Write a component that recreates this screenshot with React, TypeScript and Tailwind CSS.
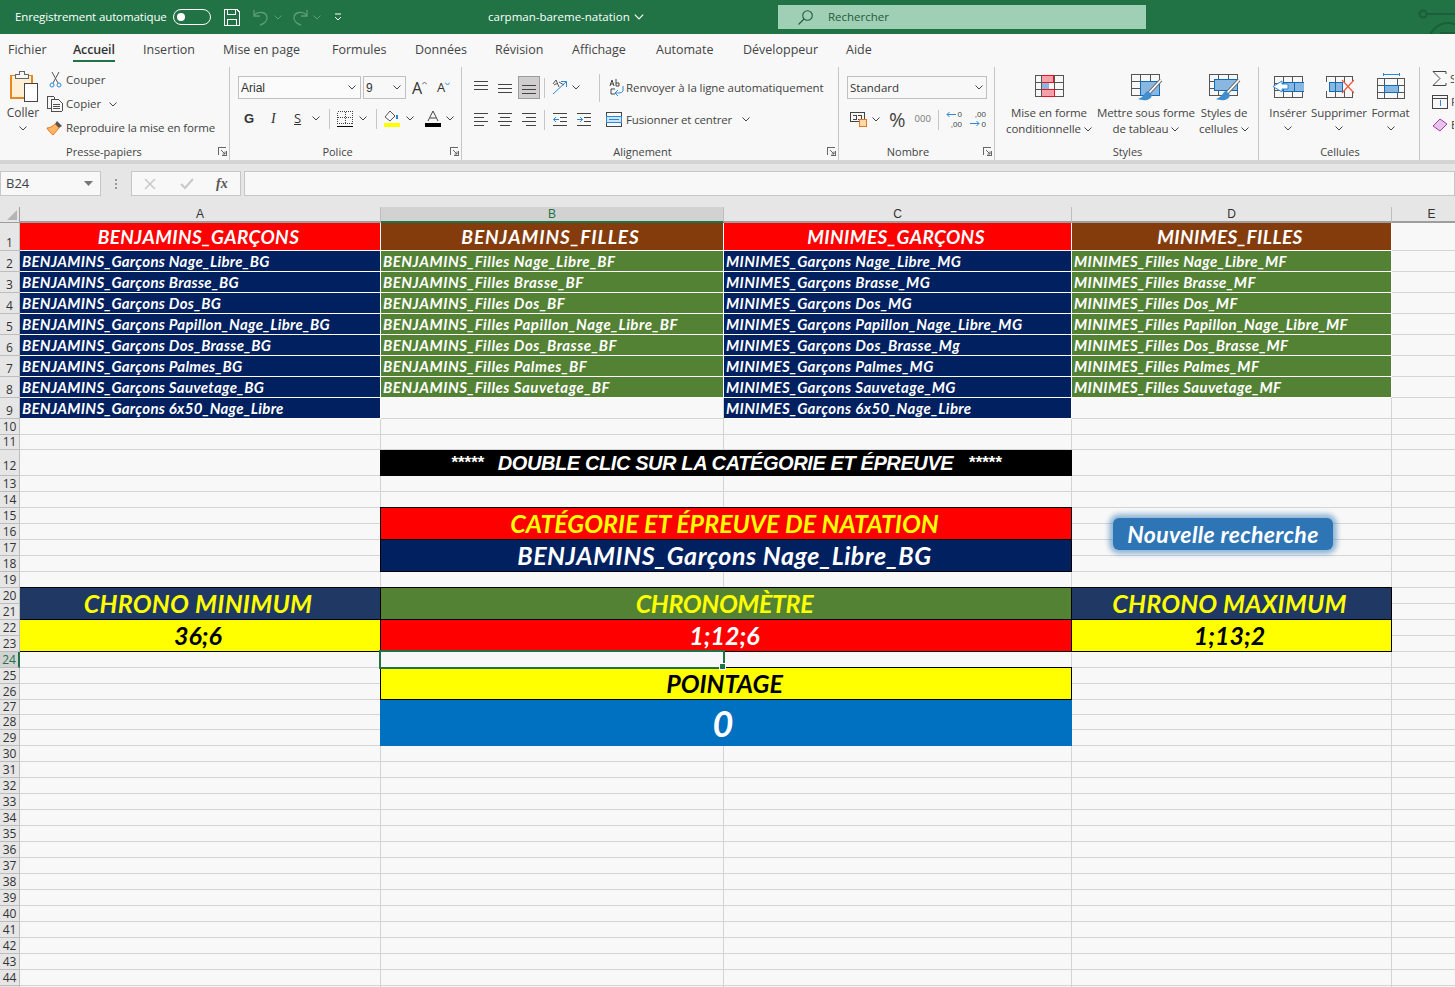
import React from "react";

const Chev = ({ c = "#444", cls = "" }: { c?: string; cls?: string }) => (
  <svg width="8" height="5" viewBox="0 0 8 5" fill="none" className={`shrink-0 ${cls}`}><path d="M0.5 0.5 L4 4 L7.5 0.5" stroke={c} strokeWidth="1" /></svg>
);
const Launcher = () => (
  <svg width="9" height="9" viewBox="0 0 9 9" fill="none" shapeRendering="crispEdges"><path d="M0.5 8 V0.5 H8 M8.5 4 V8.5 H4" stroke="#666" /><path d="M3 3 L7 7 M7 4.5 V7 H4.5" stroke="#666" shapeRendering="auto" /></svg>
);
const Lines = ({ rows, w = 14 }: { rows: number[][]; w?: number }) => (
  <svg width={w} height="13" viewBox={`0 0 ${w} 13`} shapeRendering="crispEdges">
    {rows.map((r, i) => <rect key={i} x={r[0]} y={r[1]} width={r[2]} height="1" fill="#444" />)}
  </svg>
);

function Group({ w, label, pr, launcher, children }: { w: string; label: string; pr: string; launcher?: boolean; children: React.ReactNode }) {
  return (
    <div className={`${w} h-full flex flex-col border-r border-[#c6c6c6] shrink-0`}>
      <div className="flex-1 min-h-0">{children}</div>
      <div className="h-[15px] mb-[1px] flex items-center text-[11px] leading-[15px] text-[#444]">
        <span className={`flex-1 text-center ${pr}`}>{label}</span>
        {launcher && <span className="mr-[2px] flex"><Launcher /></span>}
      </div>
    </div>
  );
}

const BrushOver = () => (
  <g shapeRendering="auto">
    <path d="M30 6 L18 19" stroke="#6b6b6b" strokeWidth="3.6" />
    <path d="M30 6 L18 19" stroke="#fff" strokeWidth="1.8" />
    <path d="M17 17 C13 18 14 23 7 25 C12 27 20 27 21 21 Z" fill="#3f8fd0" />
  </g>
);

const TabsData: [string, string][] = [
  ["Fichier", "w-[65px] ml-[8px]"],
  ["Accueil", "w-[70px]"],
  ["Insertion", "w-[80px]"],
  ["Mise en page", "w-[109px]"],
  ["Formules", "w-[83px]"],
  ["Données", "w-[80px]"],
  ["Révision", "w-[77px]"],
  ["Affichage", "w-[84px]"],
  ["Automate", "w-[87px]"],
  ["Développeur", "w-[103px]"],
  ["Aide", "w-[40px]"],
];

function TitleBar() {
  return (
    <div className="h-[34px] bg-[#217346] flex items-center text-white text-[11.5px] overflow-hidden">
      <span className="ml-[15px] w-[152px] whitespace-nowrap tracking-[-0.12px]">Enregistrement automatique</span>
      <span className="ml-[6px] w-[38px] h-[16px] rounded-full border border-white flex items-center pl-[3px]"><span className="w-[8px] h-[8px] rounded-full bg-white" /></span>
      <svg className="ml-[13px]" width="16" height="17" viewBox="0 0 16 17" fill="none" stroke="#fff" shapeRendering="crispEdges"><path d="M0.5 0.5 H13 L15.5 3 V16.5 H0.5 Z M3.5 0.5 V5.5 H11.5 V0.5 M3.5 16.5 V10.5 H12.5 V16.5" /></svg>
      <svg className="ml-[13px]" width="15" height="17" viewBox="0 0 15 17" fill="none" stroke="#5e9c7b" strokeWidth="1.3"><path d="M1 1 V7 H7 M1 7 C4 2 14 2 14 9 C14 12 11 15 7 16" /></svg>
      <Chev c="#5e9c7b" cls="ml-[6px]" />
      <svg className="ml-[11px]" width="15" height="17" viewBox="0 0 15 17" fill="none" stroke="#5e9c7b" strokeWidth="1.3"><path d="M14 1 V7 H8 M14 7 C11 2 1 2 1 9 C1 12 4 15 8 16" /></svg>
      <Chev c="#5e9c7b" cls="ml-[5px]" />
      <svg className="ml-[13px]" width="8" height="8" viewBox="0 0 8 8" fill="none" stroke="#fff"><path d="M1 1 H7" /><path d="M1 4 L4 7 L7 4" /></svg>
      <span className="ml-[146px] w-[142px] whitespace-nowrap">carpman-bareme-natation</span>
      <Chev c="#fff" cls="ml-[4px] w-[10px] h-[6px]" />
      <div className="ml-[134px] w-[368px] h-[24px] bg-[#9fcfb4] flex items-center text-[#1f5c3b]">
        <svg className="ml-[20px]" width="15" height="15" viewBox="0 0 15 15" fill="none" stroke="#1f5c3b" strokeWidth="1.1"><circle cx="9.5" cy="5.5" r="4.8" /><path d="M6 9 L0.5 14.5" /></svg>
        <span className="ml-[15px]">Rechercher</span>
      </div>
      <svg className="ml-auto" width="37" height="34" viewBox="0 0 37 34" fill="none" stroke="#1b5e39" strokeWidth="2"><circle cx="5" cy="14" r="3.5" /><path d="M9 14 H37" /><circle cx="30" cy="42" r="19" /><path d="M22 33 H38 M22 38 H38" /></svg>
    </div>
  );
}

function Tabs() {
  return (
    <div className="h-[33px] flex items-start pt-[7px] text-[12.5px] leading-[18px] text-[#444]">
      {TabsData.map(([t, w]) => (
        <div key={t} className={`${w} shrink-0 whitespace-nowrap`}>
          {t === "Accueil" ? (
            <span className="inline-block font-semibold text-[#333] border-b-[2px] border-[#217346] h-[21px] tracking-[-0.15px]">{t}</span>
          ) : t}
        </div>
      ))}
    </div>
  );
}

function Clipboard() {
  return (
    <div className="flex h-full">
      <div className="w-[46px] flex flex-col items-center pt-[4px] text-[12px] text-[#444]">
        <svg width="30" height="31" viewBox="0 0 30 31" fill="none" shapeRendering="crispEdges">
          <path d="M3 4.5 H24 V27 H3 Z" fill="#fdf0d5" stroke="#e8861f" strokeWidth="1.5" />
          <path d="M7 7.5 V3.5 H11 V0.5 H16 V3.5 H20 V7.5 Z" fill="#f8f8f8" stroke="#666" />
          <rect x="16.5" y="12.5" width="13" height="18" fill="#fff" stroke="#444" />
        </svg>
        <span className="mt-[3px] leading-[16px]">Coller</span>
        <Chev cls="mt-[5px]" />
      </div>
      <div className="flex flex-col text-[11.5px] text-[#444] pt-[1px]">
        <div className="h-[24px] flex items-center">
          <svg className="ml-[3px]" width="13" height="16" viewBox="0 0 13 16" fill="none" stroke="#555" strokeWidth="1"><path d="M3 0 L9 11 M10 0 L4 11" /><circle cx="3" cy="13" r="2" stroke="#2b88d8" /><circle cx="10" cy="13" r="2" stroke="#2b88d8" /></svg>
          <span className="ml-[4px]">Couper</span>
        </div>
        <div className="h-[24px] flex items-center">
          <svg className="ml-[1px]" width="16" height="16" viewBox="0 0 17 16" fill="none" stroke="#444" shapeRendering="crispEdges"><path d="M4.5 12.5 H0.5 V0.5 H7.5 V3" /><path d="M4.5 3.5 H12.5 L16 7 V15.5 H4.5 Z M6.5 8.5 H13.5 M6.5 10.5 H13.5 M6.5 12.5 H13.5" /></svg>
          <span className="ml-[3px]">Copier</span>
          <Chev cls="ml-[8px]" />
        </div>
        <div className="h-[24px] flex items-center">
          <svg width="17" height="16" viewBox="0 0 17 16" fill="none"><path d="M11 1 L16 6 L13 8 L9 4 Z" fill="#555" /><path d="M9 4 L13 8 L7 15 C5 13 3 12 1 8 C4 8 7 6 9 4 Z" fill="#fbb767" stroke="#e8761f" /></svg>
          <span className="ml-[3px] whitespace-nowrap tracking-[-0.15px]">Reproduire la mise en forme</span>
        </div>
      </div>
    </div>
  );
}

function Police() {
  return (
    <div className="pl-[8px] pt-[9px] text-[12px] text-[#333]">
      <div className="flex items-center h-[23px]">
        <div className="w-[123px] h-[23px] border border-[#c0c0c0] bg-[#fbfbfb] flex items-center pl-[2px] pr-[4px] justify-between"><span className="font-['Liberation_Sans',sans-serif]">Arial</span><Chev /></div>
        <div className="ml-[2px] w-[43px] h-[23px] border border-[#c0c0c0] flex items-center pl-[2px] pr-[4px] justify-between"><span className="font-['Liberation_Sans',sans-serif]">9</span><Chev /></div>
        <span className="ml-[6px] w-[17px] text-[16px] leading-none flex items-start">A<svg className="mt-[1px]" width="5" height="4" viewBox="0 0 5 4" fill="none" stroke="#666"><path d="M0 3.5 L2.5 1 L5 3.5" /></svg></span>
        <span className="ml-[8px] w-[15px] text-[13px] leading-none flex items-start">A<svg className="mt-[1px]" width="5" height="4" viewBox="0 0 5 4" fill="none" stroke="#2b88d8"><path d="M0 0.5 L2.5 3 L5 0.5" /></svg></span>
      </div>
      <div className="flex items-center h-[21px] mt-[9px]">
        <span className="ml-[6px] w-[11px] font-bold text-[13px] font-['Liberation_Sans',sans-serif]">G</span>
        <span className="ml-[16px] w-[8px] italic text-[14px] font-['Liberation_Serif',serif]">I</span>
        <span className="ml-[15px] w-[8px] underline text-[13px]">S</span>
        <Chev cls="ml-[10px]" />
        <span className="ml-[9px] w-px h-[20px] bg-[#c6c6c6]" />
        <svg className="ml-[7px]" width="16" height="16" viewBox="0 0 16 16" fill="none" stroke="#444" shapeRendering="crispEdges"><path d="M0.5 0.5 H15.5 V12.5 H0.5 Z M8 0.5 V12.5 M0.5 6.5 H15.5" strokeDasharray="1 1" /><path d="M0 15.5 H16" stroke="#000" /></svg>
        <Chev cls="ml-[6px]" />
        <span className="ml-[9px] w-px h-[20px] bg-[#c6c6c6]" />
        <svg className="ml-[7px]" width="16" height="17" viewBox="0 0 16 17" fill="none"><path d="M6 1 L1 7 L6 11 L11 6 Z" stroke="#555" /><path d="M13 5 V9" stroke="#2b88d8" strokeWidth="2" /><rect x="0" y="13" width="16" height="4" fill="#ffff00" /></svg>
        <Chev cls="ml-[6px]" />
        <svg className="ml-[11px]" width="16" height="17" viewBox="0 0 16 17" fill="none"><path d="M3 11 L8 1 L13 11 M5 8 H11" stroke="#444" /><rect x="0" y="13" width="16" height="4" fill="#000" /></svg>
        <Chev cls="ml-[5px]" />
      </div>
    </div>
  );
}

function Alignement() {
  return (
    <div className="pl-[12px] text-[11.5px] text-[#444]">
      <div className="flex items-center h-[23px] mt-[9px]">
        <Lines rows={[[0, 0, 14], [0, 4, 14], [0, 8, 14]]} />
        <span className="ml-[10px] flex"><Lines rows={[[0, 3, 14], [0, 7, 14], [0, 11, 14]]} /></span>
        <span className="ml-[6px] w-[22px] h-[23px] bg-[#d0cece] border border-[#9c9c9c] flex items-center justify-center"><Lines rows={[[0, 4, 14], [0, 8, 14], [0, 12, 14]]} /></span>
        <span className="ml-[4px] w-px h-[20px] bg-[#c6c6c6]" />
        <svg className="ml-[7px]" width="17" height="17" viewBox="0 0 17 17" fill="none"><path d="M1 15 L14 3 M9 2.5 H14.5 V8" stroke="#2b88d8" /><path d="M1 5 L4 1 L7 8 M2 6 L6 4 M7 3 L12 6" stroke="#555" /></svg>
        <Chev cls="ml-[3px]" />
        <span className="ml-[19px] w-px h-[28px] bg-[#c6c6c6]" />
        <svg className="ml-[9px] shrink-0" width="15" height="17" viewBox="0 0 15 17" fill="none"><path d="M1 7 L3 1 L5 7 M1.5 5 H4.5 M7 0 V7 M7 4 H10 V7 H7 M6 10 H2 V15 H6" stroke="#444" /><path d="M14 7 V11 C14 14 11 14 7 14 M9 11 L6 14 L9 17" stroke="#2b88d8" /></svg>
        <span className="ml-[2px] whitespace-nowrap tracking-[-0.09px]">Renvoyer à la ligne automatiquement</span>
      </div>
      <div className="flex items-center h-[21px] mt-[10px]">
        <Lines rows={[[0, 0, 14], [0, 4, 10], [0, 8, 14], [0, 12, 10]]} />
        <span className="ml-[10px] flex"><Lines rows={[[0, 0, 14], [2, 4, 10], [0, 8, 14], [2, 12, 10]]} /></span>
        <span className="ml-[10px] flex"><Lines rows={[[0, 0, 14], [4, 4, 10], [0, 8, 14], [4, 12, 10]]} /></span>
        <span className="ml-[8px] w-px h-[20px] bg-[#c6c6c6]" />
        <svg className="ml-[8px]" width="14" height="13" viewBox="0 0 14 13" fill="none"><path d="M0 0.5 H14 M7 4.5 H14 M7 8.5 H14 M0 12.5 H14" stroke="#444" /><path d="M6 6.5 H0.5 M3 4 L0.5 6.5 L3 9" stroke="#2b88d8" /></svg>
        <svg className="ml-[10px]" width="14" height="13" viewBox="0 0 14 13" fill="none"><path d="M0 0.5 H14 M7 4.5 H14 M7 8.5 H14 M0 12.5 H14" stroke="#444" /><path d="M0 6.5 H5.5 M3 4 L5.5 6.5 L3 9" stroke="#2b88d8" /></svg>
        <svg className="ml-[15px]" width="16" height="15" viewBox="0 0 16 15" fill="none" shapeRendering="crispEdges"><rect x="0.5" y="0.5" width="15" height="14" stroke="#444" /><rect x="0.5" y="4.5" width="15" height="6" fill="#cfe4f6" stroke="#2b88d8" /><path d="M3 7.5 H13" stroke="#2b88d8" /></svg>
        <span className="ml-[4px] whitespace-nowrap tracking-[-0.15px]">Fusionner et centrer</span>
        <Chev cls="ml-[10px]" />
      </div>
    </div>
  );
}

function Nombre() {
  const dec = "block h-[9.5px] leading-[9.5px] text-[8px] text-right text-[#444] font-['Liberation_Sans',sans-serif]";
  return (
    <div className="pl-[8px] pt-[9px] text-[12px] text-[#333]">
      <div className="w-[140px] h-[23px] border border-[#c0c0c0] flex items-center justify-between pl-[2px] pr-[3px] text-[11.5px]"><span>Standard</span><Chev /></div>
      <div className="flex items-center h-[21px] mt-[10px]">
        <svg className="ml-[3px]" width="17" height="15" viewBox="0 0 17 15" fill="none" shapeRendering="crispEdges"><rect x="0.5" y="0.5" width="14" height="9" stroke="#444" /><path d="M3 3 H6 V7 H3 M8 3 H11 V7 H8" stroke="#444" /><rect x="9.5" y="7.5" width="7" height="7" fill="#fbd9a9" stroke="#e8761f" /></svg>
        <Chev cls="ml-[5px]" />
        <span className="ml-[9px] text-[20px] leading-none text-[#444]">%</span>
        <span className="ml-[9px] text-[9.5px] text-[#777]">000</span>
        <span className="ml-[7px] w-px h-[20px] bg-[#c6c6c6]" />
        <span className="ml-[7px] relative w-[16px] h-[19px]"><span className={dec}>0</span><span className={dec}>,00</span><svg className="absolute left-0 top-[1px]" width="10" height="7" viewBox="0 0 10 7" fill="none" stroke="#2b88d8"><path d="M10 3.5 H1 M3.5 1 L1 3.5 L3.5 6" /></svg></span>
        <span className="ml-[8px] relative w-[16px] h-[19px]"><span className={dec}>,00</span><span className={dec}>0</span><svg className="absolute left-0 top-[10px]" width="10" height="7" viewBox="0 0 10 7" fill="none" stroke="#2b88d8"><path d="M0 3.5 H9 M6.5 1 L9 3.5 L6.5 6" /></svg></span>
      </div>
    </div>
  );
}

function BigBtn({ w, icon, l1, l2 }: { w: string; icon: React.ReactNode; l1: string; l2?: string }) {
  return (
    <div className={`${w} shrink-0 flex flex-col items-center pt-[7px] text-[11.5px] leading-[16px] text-[#444] whitespace-nowrap`}>
      <div className="h-[24px] flex items-center">{icon}</div>
      <span className="mt-[7px] tracking-[-0.1px]">{l1}</span>
      {l2 ? (
        <span className="flex items-center gap-[3px] tracking-[-0.1px]">{l2}<Chev /></span>
      ) : (
        <Chev cls="mt-[5px]" />
      )}
    </div>
  );
}

const tableLines = "M0.5 0.5 H28.5 V21.5 H0.5 Z M0.5 7.5 H28.5 M0.5 14.5 H28.5 M9.5 0.5 V21.5 M19.5 0.5 V21.5";

function Styles() {
  return (
    <div className="flex pl-[5px]">
      <BigBtn w="w-[98px]" l1="Mise en forme" l2="conditionnelle" icon={
        <svg width="29" height="22" viewBox="0 0 29 22" fill="none" shapeRendering="crispEdges"><path d="M6 0 H18 V7 H6 Z M6 14 H20 V22 H6 Z" fill="#f7a1a8" /><path d="M6 7 H14 V14 H6 Z" fill="#89b7e0" /><path d="M0.5 0.5 H28.5 V21.5 H0.5 Z M6.5 0.5 V21.5 M19.5 0.5 V21.5 M0.5 7.5 H6.5 M0.5 14.5 H6.5 M19.5 7.5 H28.5 M19.5 14.5 H28.5" stroke="#555" /><path d="M6.5 0.5 H18.5 V7.5 H6.5 M6.5 14.5 H19.5 V21.5 H6.5" stroke="#e81123" /></svg>
      } />
      <BigBtn w="w-[96px]" l1="Mettre sous forme" l2="de tableau" icon={
        <svg width="32" height="27" viewBox="0 0 32 27" fill="none" className="mt-[3px] ml-[2px]"><g shapeRendering="crispEdges"><path d={tableLines} stroke="#555" /><path d="M9.5 7.5 H28.5 V21.5 H9.5 Z" fill="#89b7e0" stroke="#0e6cb8" /></g><BrushOver /></svg>
      } />
      <BigBtn w="w-[60px]" l1="Styles de" l2="cellules" icon={
        <svg width="32" height="27" viewBox="0 0 32 27" fill="none" className="mt-[3px] ml-[2px]"><g shapeRendering="crispEdges"><path d={tableLines} stroke="#555" /><path d="M5.5 5.5 H28.5 V16.5 H5.5 Z" fill="#89b7e0" stroke="#0e6cb8" /></g><BrushOver /></svg>
      } />
    </div>
  );
}

function Cellules() {
  return (
    <div className="flex pl-[4px]">
      <BigBtn w="w-[50px]" l1="Insérer" icon={
        <svg width="32" height="24" viewBox="0 0 32 24" fill="none"><g shapeRendering="crispEdges"><path d="M2.5 2.5 H30 V23 H2.5 Z M2.5 9.5 H30 M2.5 16.5 H30 M11.5 2.5 V23 M20.5 2.5 V23" stroke="#555" /><path d="M11 8 H32 V17 H11 Z M22.5 8 V17" fill="#89b7e0" stroke="#0e6cb8" /></g><path d="M10 7 L1 12.5 L10 18 V15 H16 V10 H10 Z" fill="#fff" stroke="#2b88d8" /></svg>
      } />
      <BigBtn w="w-[52px]" l1="Supprimer" icon={
        <svg width="30" height="24" viewBox="0 0 30 24" fill="none"><g shapeRendering="crispEdges"><path d="M2.5 8 V2.5 H28 V8 M2.5 17 V23 H28 V17 M11.5 2.5 V8 M11.5 17 V23 M20.5 2.5 V8 M20.5 17 V23" stroke="#555" /><path d="M5 8 H18 V17 H5 Z M11.5 8 V17" fill="#89b7e0" stroke="#0e6cb8" /></g><path d="M18 6 L30 19 M30 6 L18 19" stroke="#f25a3c" strokeWidth="1.2" /></svg>
      } />
      <BigBtn w="w-[51px]" l1="Format" icon={
        <svg width="28" height="26" viewBox="0 0 28 26" fill="none" shapeRendering="crispEdges"><path d="M6 0 V3 M6 1.5 H22 M22 0 V3" stroke="#2b88d8" /><path d="M0.5 5.5 H27.5 V25.5 H0.5 Z M0.5 12.5 H27.5 M0.5 19.5 H27.5 M7.5 5.5 V25.5 M20.5 5.5 V25.5" stroke="#555" /><path d="M7 12 H21 V19 H7 Z" fill="#89b7e0" stroke="#0e6cb8" /></svg>
      } />
    </div>
  );
}

function Edition() {
  return (
    <div className="flex flex-col pl-[12px] text-[11.5px] text-[#444] whitespace-nowrap">
      <div className="h-[23px] flex items-center"><svg className="shrink-0 mr-[3px]" width="15" height="15" viewBox="0 0 15 15" fill="none" stroke="#444"><path d="M14 3 V0.5 H1 L8 7.5 L1 14.5 H14 V12" /></svg><span>Somme automatique</span></div>
      <div className="h-[23px] flex items-center"><svg className="shrink-0 mr-[3px]" width="16" height="14" viewBox="0 0 16 14" fill="none" shapeRendering="crispEdges"><rect x="0.5" y="0.5" width="15" height="13" stroke="#444" /><path d="M0.5 3.5 H15.5" stroke="#444" /><path d="M8 5 V11" stroke="#2b88d8" /></svg><span>Remplissage</span></div>
      <div className="h-[23px] flex items-center"><svg className="shrink-0 mr-[3px]" width="16" height="14" viewBox="0 0 16 14" fill="none"><path d="M1 8 L8 1 L15 6 L8 13 Z" fill="#e8c4ec" stroke="#a43bb0" /></svg><span>Effacer</span></div>
    </div>
  );
}

function Ribbon() {
  return (
    <div className="h-[93px] flex">
      <Group w="w-[230px]" label="Presse-papiers" pr="pr-[10px]" launcher><Clipboard /></Group>
      <Group w="w-[232px]" label="Police" pr="pr-[5px]" launcher><Police /></Group>
      <Group w="w-[377px]" label="Alignement" pr="pr-[4px]" launcher><Alignement /></Group>
      <Group w="w-[156px]" label="Nombre" pr="pr-[6px]" launcher><Nombre /></Group>
      <Group w="w-[264px]" label="Styles" pr="pl-[2px]"><Styles /></Group>
      <Group w="w-[161px]" label="Cellules" pr="pl-[2px]"><Cellules /></Group>
      <div className="w-[34px] overflow-hidden"><Edition /></div>
    </div>
  );
}

function FormulaBar() {
  return (
    <div className="h-[47px] bg-[#e6e6e6] border-t-[4px] border-[#d4d4d4] flex pt-[7px] text-[12px] text-[#444]">
      <div className="w-[101px] h-[25px] bg-[#f8f8f8] border border-[#c6c6c6] flex items-center justify-between pl-[5px] pr-[7px]">
        <span className="text-[13px]">B24</span>
        <svg width="9" height="5" viewBox="0 0 9 5"><path d="M0 0 H9 L4.5 5 Z" fill="#777" /></svg>
      </div>
      <div className="w-[30px] h-[25px] flex flex-col items-center justify-center gap-[2px]">
        <span className="w-[2px] h-[2px] bg-[#999]" /><span className="w-[2px] h-[2px] bg-[#999]" /><span className="w-[2px] h-[2px] bg-[#999]" />
      </div>
      <div className="w-[110px] h-[25px] bg-[#f8f8f8] border border-[#c6c6c6] flex items-center pl-[12px]">
        <svg width="12" height="12" viewBox="0 0 12 12" fill="none" stroke="#c8c8c8" strokeWidth="1.5"><path d="M1 1 L11 11 M11 1 L1 11" /></svg>
        <svg className="ml-[24px]" width="14" height="12" viewBox="0 0 14 12" fill="none" stroke="#c8c8c8" strokeWidth="2"><path d="M1 6 L5 10 L13 1" /></svg>
        <span className="ml-[22px] italic font-['Liberation_Serif',serif] text-[14px] font-bold text-[#555]">fx</span>
      </div>
      <div className="ml-[3px] flex-1 h-[25px] bg-[#f8f8f8] border border-[#c6c6c6]" />
    </div>
  );
}

const ROWS = 45;
const cal = "font-['Lato',sans-serif] font-bold italic";
const listA = ["Nage_Libre_BG", "Brasse_BG", "Dos_BG", "Papillon_Nage_Libre_BG", "Dos_Brasse_BG", "Palmes_BG", "Sauvetage_BG", "6x50_Nage_Libre"];
const listB = ["Nage_Libre_BF", "Brasse_BF", "Dos_BF", "Papillon_Nage_Libre_BF", "Dos_Brasse_BF", "Palmes_BF", "Sauvetage_BF"];
const listC = ["Nage_Libre_MG", "Brasse_MG", "Dos_MG", "Papillon_Nage_Libre_MG", "Dos_Brasse_Mg", "Palmes_MG", "Sauvetage_MG", "6x50_Nage_Libre"];
const listD = ["Nage_Libre_MF", "Brasse_MF", "Dos_MF", "Papillon_Nage_Libre_MF", "Dos_Brasse_MF", "Palmes_MF", "Sauvetage_MF"];

function Sheet() {
  const blanks: React.ReactNode[] = [];
  for (let r = 1; r <= ROWS; r++) {
    const active = r === 24;
    blanks.push(
      <div key={`h${r}`} style={{ gridRow: r + 1, gridColumn: 1 }} className={`flex items-end justify-center border-b overflow-hidden text-[12px] leading-[15px] ${r === 12 ? "pb-[2px]" : ""} ${active ? "bg-[#d2d2d2] text-[#217346] border-[#bdbdbd] border-r-2 border-r-[#217346]" : "bg-[#e6e6e6] text-[#333] border-[#bdbdbd] border-r"}`}>{r}</div>
    );
    for (let c = 2; c <= 6; c++) {
      blanks.push(<div key={`${r}-${c}`} style={{ gridRow: r + 1, gridColumn: c }} className="border-r border-b border-[#d4d4d4]" />);
    }
  }
  const list = (items: string[], prefix: string, cls: string) =>
    items.map((t, i) => (
      <div key={prefix + t} style={{ gridRow: i + 3 }} className={`${cls} border-b border-r border-white flex items-center pl-[2px] text-white text-[15px] leading-none whitespace-nowrap overflow-hidden ${cal}`}>{prefix} {t}</div>
    ));
  const big = "flex items-center justify-center whitespace-nowrap leading-none";
  const head = `border-b border-r border-white text-white text-[19px] pr-[3px] ${big} ${cal}`;
  return (
    <div className="relative h-[780px] overflow-hidden bg-[#f8f8f8] grid grid-cols-[20px_361px_343px_348px_320px_80px] grid-rows-[16px_28px_repeat(8,21px)_16px_15px_26px_16px_16px_repeat(12,16px)_15px_15px_16px_repeat(16,16px)]">
      <div className="col-start-1 row-start-1 bg-[#e6e6e6] border-r border-b border-[#9e9e9e] flex items-end justify-end pr-[2px] pb-[2px]">
        <svg width="10" height="10" viewBox="0 0 10 10"><path d="M10 0 V10 H0 Z" fill="#b5b5b5" /></svg>
      </div>
      {["A", "B", "C", "D", "E"].map((l, i) => (
        <div key={l} style={{ gridColumn: i + 2, gridRow: 1 }} className={`flex items-center justify-center text-[12px] font-['Liberation_Sans',sans-serif] ${l === "B" ? "bg-[#d2d2d2] text-[#217346] border-b-2 border-b-[#217346] border-r border-r-[#bdbdbd]" : "bg-[#e6e6e6] text-[#333] border-r border-r-[#bdbdbd] border-b-2 border-b-[#9e9e9e]"}`}>{l}</div>
      ))}
      {blanks}

      <div className={`col-start-2 row-start-2 bg-[#ff0000] tracking-[0.4px] ${head}`}>BENJAMINS_GARÇONS</div>
      <div className={`col-start-3 row-start-2 bg-[#843c0c] tracking-[0.95px] ${head}`}>BENJAMINS_FILLES</div>
      <div className={`col-start-4 row-start-2 bg-[#ff0000] tracking-[0.4px] ${head}`}>MINIMES_GARÇONS</div>
      <div className={`col-start-5 row-start-2 bg-[#843c0c] tracking-[0.4px] ${head}`}>MINIMES_FILLES</div>
      {list(listA, "BENJAMINS_Garçons", "col-start-2 bg-[#002060] tracking-[0.3px]")}
      {list(listB, "BENJAMINS_Filles", "col-start-3 bg-[#548235] tracking-[0.53px]")}
      {list(listC, "MINIMES_Garçons", "col-start-4 bg-[#002060] tracking-[0.39px]")}
      {list(listD, "MINIMES_Filles", "col-start-5 bg-[#548235] tracking-[0.38px]")}

      <div className="col-start-3 col-span-2 row-start-13 -ml-px bg-black text-white flex items-center justify-center whitespace-nowrap font-['Liberation_Sans',sans-serif] font-bold italic">
        <span className="text-[17px]">*****</span>
        <span className="ml-[14px] text-[20px] leading-none tracking-[-0.4px]">DOUBLE CLIC SUR LA CATÉGORIE ET ÉPREUVE</span>
        <span className="ml-[15px] text-[17px]">*****</span>
      </div>

      <div className={`col-start-3 col-span-2 row-start-16 row-span-2 -ml-px -mt-px border border-black bg-[#ff0000] text-[#ffff00] text-[25px] pr-[3px] ${big} ${cal}`}>CATÉGORIE ET ÉPREUVE DE NATATION</div>
      <div className={`col-start-3 col-span-2 row-start-18 row-span-2 -ml-px border border-t-0 border-black bg-[#002060] text-white text-[25px] tracking-[0.55px] pr-[3px] ${big} ${cal}`}>BENJAMINS_Garçons Nage_Libre_BG</div>

      <div className={`col-start-2 row-start-21 row-span-2 -mt-px border border-l-0 border-black bg-[#203864] text-[#ffff00] text-[25px] tracking-[0.3px] pr-[4px] ${big} ${cal}`}>CHRONO MINIMUM</div>
      <div className={`col-start-3 col-span-2 row-start-21 row-span-2 -mt-px border border-l-0 border-black bg-[#548235] text-[#ffff00] text-[25px] tracking-[-0.35px] pr-[3px] ${big} ${cal}`}>CHRONOMÈTRE</div>
      <div className={`col-start-5 row-start-21 row-span-2 -mt-px border border-l-0 border-black bg-[#203864] text-[#ffff00] text-[25px] tracking-[0.2px] pr-[4px] ${big} ${cal}`}>CHRONO MAXIMUM</div>
      <div className={`col-start-2 row-start-23 row-span-2 border border-l-0 border-t-0 border-black bg-[#ffff00] text-black text-[25px] pr-[4px] ${big} ${cal}`}>36;6</div>
      <div className={`col-start-3 col-span-2 row-start-23 row-span-2 border border-l-0 border-t-0 border-black bg-[#ff0000] text-white text-[25px] pr-[3px] ${big} ${cal}`}>1;12;6</div>
      <div className={`col-start-5 row-start-23 row-span-2 border border-l-0 border-t-0 border-black bg-[#ffff00] text-black text-[25px] pr-[4px] ${big} ${cal}`}>1;13;2</div>

      <div className={`col-start-3 col-span-2 row-start-26 row-span-2 -ml-px -mt-px border border-black bg-[#ffff00] text-black text-[25px] pr-[3px] ${big} ${cal}`}>POINTAGE</div>
      <div className={`col-start-3 col-span-2 row-start-28 row-span-3 -ml-px bg-[#0070c0] text-white text-[36px] pr-[6px] ${big} ${cal}`}>0</div>

      <div className="relative col-start-3 row-start-25 -ml-[2px] -mt-[2px] -mr-px -mb-px border-2 border-[#217346]">
        <span className="absolute -right-[3px] -bottom-[3px] w-[5px] h-[5px] bg-[#217346] border border-white box-content" />
      </div>

      <div className={`absolute left-[1113px] top-[311px] w-[220px] h-[32px] rounded-[6px] bg-[#2e75b6] shadow-[0_0_5px_4px_rgba(46,117,182,0.5)] text-white text-[23px] tracking-[0.35px] ${big} ${cal}`}>Nouvelle recherche</div>
    </div>
  );
}

export default function App() {
  return (
    <div className="w-[1455px] h-[987px] overflow-hidden bg-[#f8f8f8] font-['Open_Sans',sans-serif]">
      <TitleBar />
      <Tabs />
      <Ribbon />
      <FormulaBar />
      <Sheet />
    </div>
  );
}
